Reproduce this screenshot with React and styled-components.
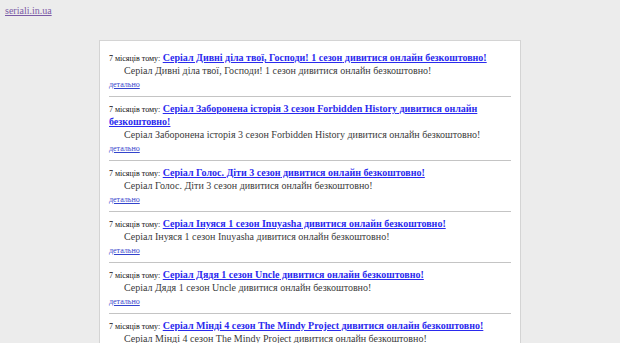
import React from "react";
import styled, { createGlobalStyle } from "styled-components";

const Global = createGlobalStyle`
  html, body {
    margin: 0;
    background: #ececec;
    font-family: "Liberation Serif", "Times New Roman", serif;
  }
`;

const serials = [
  "Серіал Дивні діла твої, Господи! 1 сезон",
  "Серіал Заборонена історія 3 сезон Forbidden History",
  "Серіал Голос. Діти 3 сезон",
  "Серіал Інуяся 1 сезон Inuyasha",
  "Серіал Дядя 1 сезон Uncle",
  "Серіал Мінді 4 сезон The Mindy Project",
];

const App = () => {
  return (
    <React.Fragment>
      <Global />
      <Header>
        <SiteLink href="#">seriali.in.ua</SiteLink>
      </Header>
      <Panel>
        {serials.map((name, i) => (
          <Item key={i} last={i === serials.length - 1}>
            <TitleLine>
              <Ago>7 місяців тому:</Ago> <Title href="#">{name} дивитися онлайн безкоштовно!</Title>
            </TitleLine>
            <Desc>{name} дивитися онлайн безкоштовно!</Desc>
            <More href="#">детально</More>
          </Item>
        ))}
      </Panel>
    </React.Fragment>
  );
};

const Header = styled.div`
  padding: 2px 5px 0;
  height: 28px;
  line-height: 14px;
`;

const SiteLink = styled.a`
  font-size: 10px;
  color: #7b5ba6;
  text-decoration: underline;
`;

const Panel = styled.div`
  width: 402px;
  margin: 10px auto 0;
  background: #fff;
  border: 1px solid #d4d4d4;
  padding: 10px 9px 0 9px;
`;

const Item = styled.div`
  padding-bottom: 5px;
  margin-bottom: 5px;
  border-bottom: ${(p) => (p.last ? "none" : "1px solid #c4c4c4")};
`;

const TitleLine = styled.div`
  font-size: 10px;
  line-height: 13px;
`;

const Ago = styled.span`
  font-size: 8px;
  line-height: 8px;
  color: #111;
`;

const Title = styled.a`
  font-size: 10px;
  font-weight: bold;
  color: #2a2aee;
  text-decoration: underline;
`;

const Desc = styled.p`
  margin: 0;
  text-indent: 15px;
  font-size: 10px;
  line-height: 14px;
  color: #3a3a3a;
`;

const More = styled.a`
  display: block;
  font-size: 8px;
  line-height: 13px;
  color: #3344cc;
  text-decoration: underline;
`;

export default App;
